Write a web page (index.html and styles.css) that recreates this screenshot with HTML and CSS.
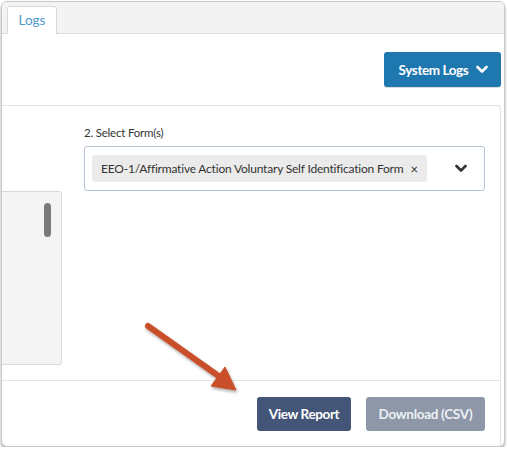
FILE: index.html
```html
<!DOCTYPE html>
<html>
<head>
<meta charset="utf-8">
<link rel="stylesheet" href="styles.css">
</head>
<body>
<div class="window">
  <div class="tabbar">
    <div class="tab">Logs</div>
  </div>
  <div class="header">
    <button class="btn-primary">System Logs
      <svg class="chev" width="12" height="9" viewBox="0 0 12 9"><path d="M1.5 2 L6 6.5 L10.5 2" fill="none" stroke="#fff" stroke-width="2.6" stroke-linecap="round" stroke-linejoin="round"/></svg>
    </button>
  </div>
  <div class="panel">
    <div class="panel-body">
      <div class="left-col">
        <div class="list-box"><div class="thumb"></div></div>
      </div>
      <div class="form-col">
        <div class="label">2. Select Form(s)</div>
        <div class="select">
          <div class="chip">EEO-1/Affirmative Action Voluntary Self Identification Form <span class="x">×</span></div>
          <svg class="sel-chev" width="12" height="9" viewBox="0 0 12 9"><path d="M1.5 2 L6 6.5 L10.5 2" fill="none" stroke="#333" stroke-width="2.6" stroke-linecap="round" stroke-linejoin="round"/></svg>
        </div>
      </div>
    </div>
    <div class="footer">
      <button class="btn-dark">View Report</button>
      <button class="btn-muted">Download (CSV)</button>
    </div>
  </div>
  <svg class="arrow" width="507" height="451" viewBox="0 0 507 451">
    <defs>
      <filter id="sh" x="-20%" y="-20%" width="140%" height="140%">
        <feDropShadow dx="1" dy="2" stdDeviation="1.5" flood-color="#000" flood-opacity="0.35"/>
      </filter>
    </defs>
    <g filter="url(#sh)" fill="#c9502a" stroke="#c9502a">
      <line x1="148" y1="326" x2="220" y2="377" stroke-width="6" stroke-linecap="round"/>
      <polygon points="236,390 211,386 225,367" stroke-width="1" stroke-linejoin="round"/>
    </g>
  </svg>
</div>
</body>
</html>
```
FILE: styles.css
```css
* { box-sizing: border-box; }
body {
  margin: 0;
  background: #fff;
  font-family: Lato, "Open Sans", "Liberation Sans", sans-serif;
  color: #333;
}
.window {
  position: relative;
  margin: 1px 0 0 1px;
  width: 504px;
  height: 446px;
  border: 1px solid #c8c8c8;
  border-radius: 6px;
  box-shadow: 0 2px 3px rgba(0,0,0,0.35);
  overflow: hidden;
  display: flex;
  flex-direction: column;
  background: #fff;
}
.tabbar {
  height: 32px;
  flex: none;
  background: #f3f3f3;
  border-bottom: 1px solid #dcdcdc;
  display: flex;
  align-items: flex-end;
  padding-left: 5px;
}
.tab {
  width: 50px;
  height: 28px;
  margin-bottom: -1px;
  background: #fff;
  border: 1px solid #d9d9d9;
  border-bottom: none;
  border-radius: 3px 3px 0 0;
  color: #4f9acb;
  font-size: 13.5px;
  display: flex;
  align-items: center;
  justify-content: center;
  padding-bottom: 1px;
}
.header {
  height: 71px;
  flex: none;
  display: flex;
  justify-content: flex-end;
  align-items: flex-start;
  padding: 18px 3px 0 0;
}
button {
  font-family: inherit;
  border: none;
  border-radius: 3px;
  font-weight: bold;
  font-size: 13.5px;
  letter-spacing: -0.4px;
  height: 34px;
  padding: 0;
}
.btn-primary {
  width: 117px;
  height: 35px;
  background: #1f77b0;
  color: #fff;
  display: flex;
  align-items: center;
  justify-content: center;
  gap: 8px;
  padding-left: 2px;
  box-shadow: 0 1px 1px rgba(0,0,0,0.15);
}
.chev { display: block; }
.panel {
  flex: 1;
  display: flex;
  flex-direction: column;
  margin-right: 3px;
  border-top: 1px solid #e2e2e2;
  border-right: 1px solid #e2e2e2;
  border-top-right-radius: 4px;
}
.panel-body {
  height: 274px;
  flex: none;
  display: flex;
  gap: 22px;
  padding-right: 15px;
}
.left-col {
  width: 60px;
  flex: none;
  padding-top: 85px;
}
.list-box {
  position: relative;
  height: 174px;
  background: #f4f4f4;
  border: 1px solid #dadada;
  border-left: none;
  border-radius: 0 3px 3px 0;
  padding: 11px 0 0 42px;
}
.thumb {
  width: 7px;
  height: 34px;
  background: #7a7a7a;
  border-radius: 4px;
}
.form-col {
  flex: 1;
  min-width: 0;
  padding-top: 19px;
}
.label {
  font-size: 11.5px;
  letter-spacing: -0.2px;
  line-height: 16px;
  height: 16px;
  margin-bottom: 5px;
  color: #333;
}
.select {
  height: 45px;
  border: 1px solid #b8c5d3;
  border-radius: 3px;
  padding: 7px;
  display: flex;
  align-items: center;
}
.chip {
  height: 27px;
  background: #ebebeb;
  border-radius: 3px;
  padding: 0 9px;
  font-size: 12px;
  letter-spacing: -0.2px;
  display: flex;
  align-items: center;
  white-space: nowrap;
  color: #333;
}
.chip .x { margin-left: 7px; font-size: 13px; }
.sel-chev { margin-left: auto; margin-right: 10px; }
.footer {
  flex: 1;
  border-top: 1px solid #e2e2e2;
  display: flex;
  justify-content: flex-end;
  align-items: flex-start;
  gap: 15px;
  padding: 16px 15px 0 0;
}
.btn-dark {
  width: 94px;
  background: #435677;
  color: #fff;
}
.btn-muted {
  width: 119px;
  background: #8d97a8;
  color: #eef0f4;
  letter-spacing: -0.3px;
}
.arrow {
  position: absolute;
  left: -2px;
  top: -2px;
  pointer-events: none;
}
```
